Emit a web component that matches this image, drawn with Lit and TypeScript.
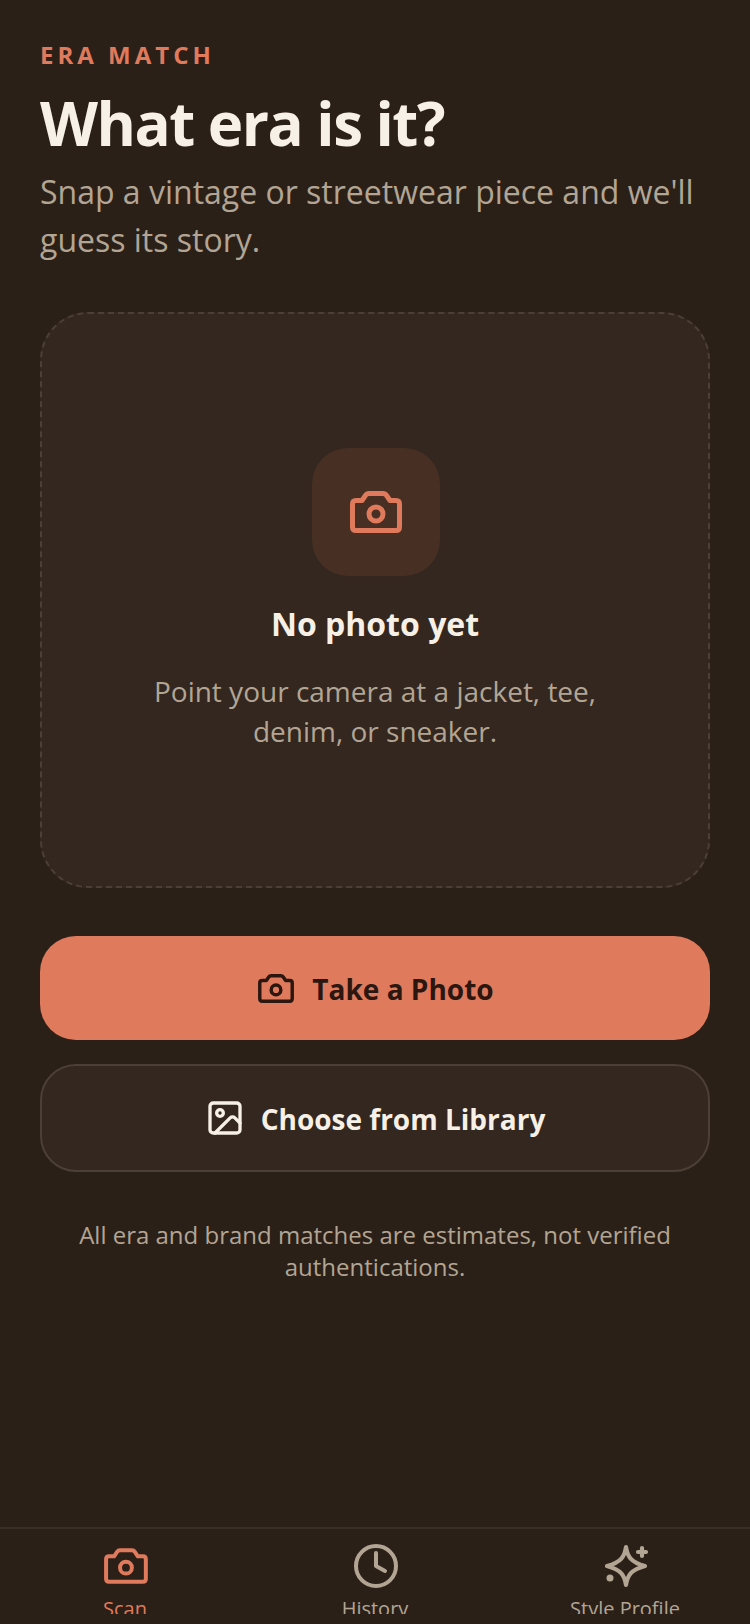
import { LitElement, html, css, svg } from "lit";
import { customElement } from "lit/decorators.js";

const camera = svg`<path d="M6 9.5H12L15.500 4.300Q16.700 2.500 19 2.500H33Q35.300 2.500 36.500 4.300L40 9.500H46Q49.500 9.500 49.500 13V36Q49.500 39.500 46 39.500H6Q2.500 39.500 2.500 36V13Q2.500 9.500 6 9.500Z"/><circle cx="26" cy="23" r="7"/>`;

@customElement("app-root")
export class AppRoot extends LitElement {
  static styles = css`
    :host {
      display: block;
      width: 750px;
      height: 1624px;
      overflow: hidden;
      background: #2b2018;
      font-family: "Open Sans", sans-serif;
      color: #f7f0e6;
    }
    .page {
      height: 1624px;
      display: flex;
      flex-direction: column;
      box-sizing: border-box;
    }
    .main {
      flex: 1;
      padding: 39px 40px 0;
      display: flex;
      flex-direction: column;
    }
    .eyebrow {
      font-size: 24px;
      line-height: 32px;
      font-weight: 700;
      letter-spacing: 4px;
      color: #e07a5c;
    }
    h1 {
      margin: 16px 0 0;
      font-size: 60px;
      line-height: 72px;
      font-weight: 700;
      letter-spacing: -1.5px;
      color: #f7f0e6;
    }
    .sub {
      margin: 9px 0 0;
      font-size: 32px;
      line-height: 48px;
      color: #b3a594;
    }
    .card {
      margin-top: 48px;
      height: 576px;
      box-sizing: border-box;
      padding-bottom: 1px;
      border: 2px dashed #4c3f35;
      border-radius: 48px;
      background: #33271f;
      display: flex;
      flex-direction: column;
      align-items: center;
      justify-content: center;
    }
    .tile {
      width: 128px;
      height: 128px;
      margin-left: 2px;
      border-radius: 36px;
      background: #472f24;
      display: flex;
      align-items: center;
      justify-content: center;
      color: #e07a5c;
    }
    .card h2 {
      margin: 28px 0 0;
      font-size: 32px;
      line-height: 40px;
      font-weight: 700;
      color: #f7f0e6;
    }
    .card p {
      margin: 27px 0 0;
      width: 480px;
      text-align: center;
      font-size: 28px;
      line-height: 40px;
      color: #b3a594;
    }
    svg {
      display: block;
      fill: none;
      stroke: currentColor;
      stroke-linecap: round;
      stroke-linejoin: round;
      flex: none;
    }
    .btn {
      display: flex;
      align-items: center;
      justify-content: center;
      border-radius: 36px;
      font-size: 28px;
      font-weight: 700;
      box-sizing: border-box;
    }
    .btn span {
      padding-top: 2px;
    }
    .primary {
      margin-top: 48px;
      height: 104px;
      gap: 18px;
      padding-left: 2px;
      background: #e07a5c;
      color: #2b1710;
    }
    .secondary {
      margin-top: 24px;
      height: 108px;
      gap: 16px;
      background: #33271f;
      border: 2px solid #4c3f35;
      color: #f7f0e6;
    }
    .note {
      margin: 47px 0 0;
      text-align: center;
      font-size: 24px;
      line-height: 32px;
      color: #b3a594;
    }
    nav {
      height: 97px;
      box-sizing: border-box;
      border-top: 2px solid #3a2e25;
      display: grid;
      grid-template-columns: repeat(3, 1fr);
      flex: none;
    }
    .tab {
      display: flex;
      flex-direction: column;
      align-items: center;
      padding-top: 13px;
      box-sizing: border-box;
      color: #b3a594;
      font-size: 20px;
      height: 85px;
      overflow: hidden;
      line-height: 28px;
    }
    .tab.active {
      color: #e07a5c;
    }
    .tab span {
      margin-top: 5px;
    }
    .solid {
      fill: currentColor;
      stroke: none;
    }
  `;

  render() {
    return html`<div class="page">
      <div class="main">
        <div class="eyebrow">ERA MATCH</div>
        <h1>What era is it?</h1>
        <p class="sub">Snap a vintage or streetwear piece and we'll guess its story.</p>
        <div class="card">
          <div class="tile">
            <svg width="52" height="42" viewBox="0 0 52 42" stroke-width="5">${camera}</svg>
          </div>
          <h2>No photo yet</h2>
          <p>Point your camera at a jacket, tee, denim, or sneaker.</p>
        </div>
        <div class="btn primary">
          <svg width="36" height="29" viewBox="0 0 52 42" stroke-width="5">${camera}</svg>
          <span>Take a Photo</span>
        </div>
        <div class="btn secondary">
          <svg width="40" height="40" viewBox="0 0 24 24" stroke-width="2">
            <rect x="3" y="3" width="18" height="18" rx="2"/>
            <circle cx="9" cy="9" r="2"/>
            <path d="M21 15l-3.100-3.100a2 2 0 0 0-2.800 0L6 21"/>
          </svg>
          <span>Choose from Library</span>
        </div>
        <p class="note">All era and brand matches are estimates, not verified authentications.</p>
      </div>
      <nav>
        <div class="tab active">
          <svg width="48" height="48" viewBox="-3.500 -7.360 56.730 56.730" stroke-width="4.700">${camera}</svg>
          <span>Scan</span>
        </div>
        <div class="tab">
          <svg width="48" height="48" viewBox="0 0 48 48" stroke-width="4">
            <circle cx="25" cy="24" r="20"/>
            <path d="M25 11V24L34 29"/>
          </svg>
          <span>History</span>
        </div>
        <div class="tab">
          <svg width="48" height="48" viewBox="0 0 48 48" stroke-width="4.200">
            <path d="M25 5C26.500 14.500 29.500 20 44 24C29.500 28 26.500 33.500 25 43C23.500 33.500 20.500 28 6 24C20.500 20 23.500 14.500 25 5Z"/>
            <path d="M41 6V14M37 10H45"/>
            <circle class="solid" cx="9" cy="36" r="3.500"/>
          </svg>
          <span>Style Profile</span>
        </div>
      </nav>
    </div>`;
  }
}
